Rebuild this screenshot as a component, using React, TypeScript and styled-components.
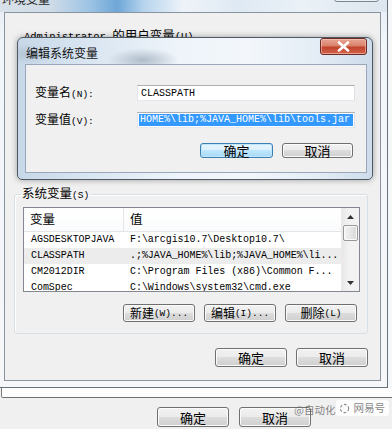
import React from "react";
import styled, { createGlobalStyle, css } from "styled-components";

const Global = createGlobalStyle`
  html, body { margin: 0; padding: 0; background: #f0f0f0; }
  body {
    font-family: "Liberation Mono", "Noto Sans CJK SC", monospace;
    font-size: 10px;
    color: #000;
  }
  * { box-sizing: border-box; }
`;

const Han = styled.span<{ $size?: number }>`
  font-family: "Noto Sans CJK SC", sans-serif;
  font-size: ${(p) => p.$size ?? 12}px;
  line-height: 1;
`;

const Page = styled.div`
  width: 392px;
  height: 429px;
  overflow: hidden;
  position: relative;
  background: #f0f0f0;
  display: flex;
  flex-direction: column;
`;

const TopArea = styled.div`
  display: flex;
  height: 388px;
  flex: none;
`;

const EnvWindow = styled.div`
  margin-left: -4px;
  width: 392px;
  height: 388px;
  flex: none;
  border-right: 1px solid #66717c;
  border-bottom: 1px solid #66717c;
  background: linear-gradient(#e4ecf4, #f3f6f9 40px, #f5f7f9);
  padding: 0 6px 6px 8px;
  display: flex;
  flex-direction: column;
`;

const RightStrip = styled.div`
  flex: 1;
  background: #f6f7f8;
`;

const GlassTitle = styled.div`
  height: 12px;
  flex: none;
  overflow: hidden;
  display: flex;
  align-items: flex-end;
  margin: 0 -6px 0 -8px;
  padding-left: 6px;
  background: linear-gradient(
    to right,
    #d9e1e8 0%,
    #cfdce8 14%,
    #9cc3e4 24%,
    #6ea7d8 31%,
    #b8d5ee 38%,
    #eef3f8 48%,
    #dfe9f3 62%,
    #eaf1f7 78%,
    #dde6ee 100%
  );
`;

const GlassTitleText = styled.span`
  font-family: "Noto Sans CJK SC", sans-serif;
  font-size: 12px;
  line-height: 14px;
  margin-bottom: -2px;
  transform: translateY(-8px);
  color: #1d1d1d;
`;

const GhostClose = styled.div`
  margin-left: auto;
  margin-right: 8px;
  align-self: flex-start;
  margin-top: -15px;
  width: 45px;
  height: 17px;
  border: 1px solid #7b8692;
  border-radius: 3px;
  background: rgba(255, 255, 255, 0.4);
`;

const EnvClient = styled.div`
  flex: 1;
  position: relative;
  border: 1px solid #8a949e;
  background: #f0f0f0;
  display: flex;
  flex-direction: column;
`;

const UserLabel = styled.div`
  margin: 16px 0 0 19px;
  height: 14px;
  line-height: 14px;
  white-space: nowrap;
  font-size: 10.5px;
`;

const HiddenUserGroup = styled.div`
  height: 144px;
  flex: none;
`;

const GroupBox = styled.fieldset`
  margin: 0 12px 0 9px;
  padding: 6px 7px 11px 8px;
  border: 1px solid #d5dfe5;
  border-radius: 3px;
  box-shadow: inset 1px 1px 0 #fff;
  min-width: 0;
`;

const Legend = styled.legend`
  padding: 0 1px;
  margin-left: -2px;
  height: 14px;
  line-height: 14px;
  white-space: nowrap;
  font-size: 9.5px;
`;

const ListBox = styled.div`
  height: 85px;
  border: 1px solid #828790;
  background: #fff;
  display: flex;
  overflow: hidden;
`;

const ListMain = styled.div`
  flex: 1;
  min-width: 0;
  display: flex;
  flex-direction: column;
`;

const HeaderRow = styled.div`
  display: flex;
  height: 24px;
  flex: none;
  border-bottom: 1px solid #e5e5e5;
  background: linear-gradient(#ffffff, #fafbfc);
`;

const HeaderCell = styled.div<{ $w?: number }>`
  ${(p) =>
    p.$w
      ? css`
          width: ${p.$w}px;
          flex: none;
          border-right: 1px solid #e5e5e5;
        `
      : css`
          flex: 1;
        `}
  display: flex;
  align-items: center;
  padding-left: 6px;
`;

const Row = styled.div<{ $sel?: boolean }>`
  display: flex;
  height: 16px;
  flex: none;
  align-items: center;
  background: ${(p) => (p.$sel ? "#ececec" : "transparent")};
`;

const Cell = styled.div<{ $w?: number }>`
  ${(p) =>
    p.$w
      ? css`
          width: ${p.$w}px;
          flex: none;
          padding-left: 7px;
        `
      : css`
          flex: 1;
          padding-left: 6px;
        `}
  white-space: nowrap;
  overflow: hidden;
  font-size: 10px;
  line-height: 16px;
  letter-spacing: -0.05px;
`;

const ScrollBar = styled.div`
  width: 18px;
  flex: none;
  background: linear-gradient(to right, #e8e8e8, #f2f2f2 40%, #f2f2f2);
  border-left: 1px solid #eaeaea;
  display: flex;
  flex-direction: column;
  align-items: center;
`;

const ArrowBox = styled.div`
  height: 17px;
  width: 100%;
  display: flex;
  align-items: center;
  justify-content: center;
  flex: none;
`;

const Thumb = styled.div`
  width: 15px;
  height: 16px;
  flex: none;
  border: 1px solid #979797;
  border-radius: 2px;
  background: linear-gradient(to right, #f4f4f4, #e6e6e6 50%, #d6d6d6 100%);
  box-shadow: inset 0 0 0 1px #fbfbfb;
`;

const ScrollSpace = styled.div`
  flex: 1;
`;

const ButtonRow = styled.div<{ $mt: number; $mr: number; $gap?: number }>`
  display: flex;
  justify-content: flex-end;
  gap: ${(p) => p.$gap ?? 9}px;
  margin-top: ${(p) => p.$mt}px;
  margin-right: ${(p) => p.$mr}px;
`;

const Button = styled.div<{ $w?: number; $h?: number; $default?: boolean }>`
  width: ${(p) => p.$w ?? 72}px;
  height: ${(p) => p.$h ?? 18}px;
  flex: none;
  display: flex;
  align-items: center;
  justify-content: center;
  white-space: nowrap;
  border-radius: 3px;
  font-size: 9.5px;
  border: 1px solid ${(p) => (p.$default ? "#3c7fb1" : "#707070")};
  box-shadow: inset 0 0 0 1px ${(p) => (p.$default ? "#bfe6fb" : "#fbfbfb")};
  background: ${(p) =>
    p.$default
      ? "linear-gradient(#eaf6fd 0%, #d9f0fc 50%, #bee6fd 50%, #a7d9f5 100%)"
      : "linear-gradient(#f2f2f2 0%, #ebebeb 50%, #dddddd 50%, #cfcfcf 100%)"};
`;

const EditDialog = styled.div`
  position: absolute;
  left: 12px;
  top: 24px;
  width: 356px;
  height: 143px;
  border: 1px solid #4e5965;
  border-radius: 6px 6px 5px 5px;
  box-shadow: 0 0 6px rgba(0, 0, 0, 0.35);
  padding: 0 5px 6px 7px;
  display: flex;
  flex-direction: column;
  background: radial-gradient(
      ellipse 36px 12px at 125px 22px,
      rgba(110, 128, 146, 0.45),
      transparent
    ),
    radial-gradient(ellipse 30px 10px at 10px 16px, rgba(150, 165, 180, 0.4), transparent),
    linear-gradient(
      to right,
      #c8d8e8 0%,
      #d9e5f1 20%,
      #eef4fa 45%,
      #f3f7fb 65%,
      #e3ecf5 85%,
      #cddbea 100%
    );
`;

const EditTitleBar = styled.div`
  height: 26px;
  flex: none;
  display: flex;
  align-items: center;
`;

const EditTitle = styled.span`
  font-family: "Noto Sans CJK SC", sans-serif;
  font-size: 12px;
  margin-left: 1px;
  margin-top: 2px;
  color: #111;
`;

const CloseButton = styled.div`
  margin-left: auto;
  align-self: flex-start;
  width: 47px;
  height: 17px;
  border: 1px solid #6a2b22;
  border-radius: 3px;
  background: linear-gradient(#e8a593 0%, #d9826c 45%, #c2432c 55%, #d1644c 100%);
  box-shadow: inset 0 0 0 1px rgba(255, 210, 200, 0.55);
  display: flex;
  align-items: center;
  justify-content: center;
`;

const EditClient = styled.div`
  flex: 1;
  border: 1px solid #98a8ba;
  background: #f0f0f0;
  padding: 20px 11px 0 9px;
  display: flex;
  flex-direction: column;
`;

const FieldRow = styled.div<{ $mt?: number }>`
  display: flex;
  align-items: center;
  height: 16px;
  margin-top: ${(p) => p.$mt ?? 0}px;
`;

const FieldLabel = styled.div`
  width: 102px;
  flex: none;
  white-space: nowrap;
  font-size: 9.5px;
`;

const TextBox = styled.div`
  flex: 1;
  height: 16px;
  border: 1px solid;
  border-color: #abadb3 #dbdfe6 #e3e9ef #e2e3ea;
  background: #fff;
  display: flex;
  align-items: center;
  padding: 0 1px 0 3px;
  overflow: hidden;
  white-space: nowrap;
  font-size: 10px;
`;

const Selected = styled.span`
  background: #3399ff;
  color: #fff;
  line-height: 12px;
  margin-left: -2px;
  padding-left: 1px;
  flex: 1;
  overflow: hidden;
`;

const BottomEdge = styled.div`
  height: 10px;
  flex: none;
  margin-left: 1px;
  background: #fdfdfd;
  border-left: 1px solid #7d7d7d;
  border-bottom: 1px solid #6f6f6f;
  border-bottom-left-radius: 2px;
`;

const BottomRow = styled.div`
  display: flex;
  gap: 10px;
  margin-top: 9px;
  padding-left: 157px;
`;

const Watermark = styled.div`
  position: absolute;
  left: 294px;
  top: 403px;
  display: flex;
  align-items: center;
  gap: 1px;
  white-space: nowrap;
`;

const WmText = styled.span`
  font-family: "Noto Sans CJK SC", sans-serif;
  font-size: 10.5px;
  line-height: 14px;
  color: rgba(90, 90, 90, 0.75);
`;

const WmBadge = styled.div`
  display: flex;
  align-items: center;
  gap: 3px;
  padding: 1px 4px 1px 3px;
  background: rgba(255, 255, 255, 0.85);
  border-radius: 3px;
  margin-top: -4px;
`;

const Up = () => (
  <svg width="7" height="4" viewBox="0 0 7 4">
    <path d="M0 4 L3.5 0 L7 4 Z" fill="#333" />
  </svg>
);
const Down = () => (
  <svg width="7" height="4" viewBox="0 0 7 4">
    <path d="M0 0 L3.5 4 L7 0 Z" fill="#333" />
  </svg>
);

const rows = [
  ["AGSDESKTOPJAVA", "F:\\arcgis10.7\\Desktop10.7\\"],
  ["CLASSPATH", ".;%JAVA_HOME%\\lib;%JAVA_HOME%\\li..."],
  ["CM2012DIR", "C:\\Program Files (x86)\\Common F..."],
  ["ComSpec", "C:\\Windows\\system32\\cmd.exe"],
];

export default function App() {
  return (
    <Page>
      <Global />
      <TopArea>
        <EnvWindow>
          <GlassTitle>
            <GlassTitleText>环境变量</GlassTitleText>
            <GhostClose />
          </GlassTitle>
          <EnvClient>
            <UserLabel>
              Administrator <Han $size={12.5}>的用户变量</Han>(U)
            </UserLabel>
            <HiddenUserGroup />
            <GroupBox>
              <Legend>
                <Han $size={12.5}>系统变量</Han>(S)
              </Legend>
              <ListBox>
                <ListMain>
                  <HeaderRow>
                    <HeaderCell $w={100}>
                      <Han $size={12.5}>变量</Han>
                    </HeaderCell>
                    <HeaderCell>
                      <Han $size={12.5}>值</Han>
                    </HeaderCell>
                  </HeaderRow>
                  {rows.map(([k, v], i) => (
                    <Row key={k} $sel={i === 1}>
                      <Cell $w={100}>{k}</Cell>
                      <Cell>{v}</Cell>
                    </Row>
                  ))}
                </ListMain>
                <ScrollBar>
                  <ArrowBox>
                    <Up />
                  </ArrowBox>
                  <Thumb />
                  <ScrollSpace />
                  <ArrowBox>
                    <Down />
                  </ArrowBox>
                </ScrollBar>
              </ListBox>
              <ButtonRow $mt={12} $mr={3}>
                <Button>
                  <Han>新建</Han>(W)...
                </Button>
                <Button>
                  <Han>编辑</Han>(I)...
                </Button>
                <Button>
                  <Han>删除</Han>(L)
                </Button>
              </ButtonRow>
            </GroupBox>
            <ButtonRow $mt={14} $mr={12}>
              <Button $h={19}>
                <Han $size={13}>确定</Han>
              </Button>
              <Button $h={19}>
                <Han $size={13}>取消</Han>
              </Button>
            </ButtonRow>

            <EditDialog>
              <EditTitleBar>
                <EditTitle>编辑系统变量</EditTitle>
                <CloseButton>
                  <svg width="13" height="11" viewBox="0 0 13 11">
                    <path
                      d="M2 1.5 L11 9.5 M11 1.5 L2 9.5"
                      stroke="#fff"
                      strokeWidth="2.6"
                      strokeLinecap="round"
                    />
                  </svg>
                </CloseButton>
              </EditTitleBar>
              <EditClient>
                <FieldRow>
                  <FieldLabel>
                    <Han>变量名</Han>(N):
                  </FieldLabel>
                  <TextBox>CLASSPATH</TextBox>
                </FieldRow>
                <FieldRow $mt={11}>
                  <FieldLabel>
                    <Han>变量值</Han>(V):
                  </FieldLabel>
                  <TextBox>
                    <Selected>HOME%\lib;%JAVA_HOME%\lib\tools.jar</Selected>
                  </TextBox>
                </FieldRow>
                <ButtonRow $mt={15} $mr={2}>
                  <Button $w={73} $h={15} $default>
                    <Han $size={13}>确定</Han>
                  </Button>
                  <Button $w={71} $h={15}>
                    <Han $size={13}>取消</Han>
                  </Button>
                </ButtonRow>
              </EditClient>
            </EditDialog>
          </EnvClient>
        </EnvWindow>
        <RightStrip />
      </TopArea>
      <BottomEdge />
      <BottomRow>
        <Button $h={20}>
          <Han $size={13}>确定</Han>
        </Button>
        <Button $h={20}>
          <Han $size={13}>取消</Han>
        </Button>
      </BottomRow>
      <Watermark>
        <WmText>@自动化</WmText>
        <WmBadge>
          <svg width="11" height="11" viewBox="0 0 12 12">
            <circle cx="6" cy="6" r="4.5" fill="none" stroke="#8a8a8a" strokeWidth="1.2" strokeDasharray="3 2" />
          </svg>
          <WmText>网易号</WmText>
        </WmBadge>
      </Watermark>
    </Page>
  );
}
